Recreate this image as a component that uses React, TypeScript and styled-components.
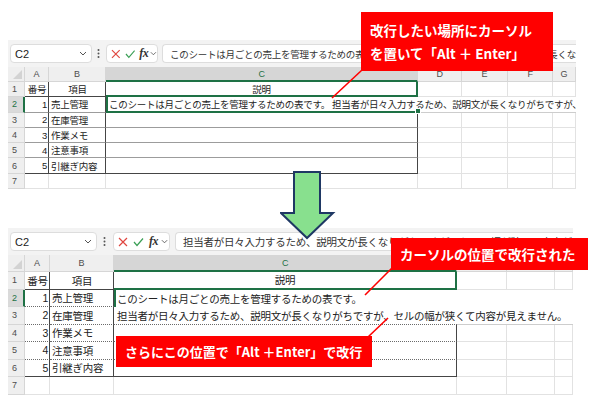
import React from "react";
import styled, { createGlobalStyle } from "styled-components";

const green = "#1e7145";
const jp = `"Liberation Sans", "Noto Sans CJK JP", sans-serif`;

const GlobalStyle = createGlobalStyle`
  html, body { margin: 0; padding: 0; background: #fff; }
  body { font-family: ${jp}; }
`;

const edge = {
  grid: "1px solid #e2e2e2",
  light: "1px solid #cdcdcd",
  dark: "1px solid #454545",
  thin: "1px solid #9c9c9c",
  dot: "1px dotted #6a6a6a",
  green: `2px solid ${green}`,
  none: "0",
};
type Edge = keyof typeof edge;

const Page = styled.div`
  position: relative;
  width: 596px;
  height: 398px;
  overflow: hidden;
  box-sizing: border-box;
  padding: 40px 0 0 8px;
  display: flex;
  flex-direction: column;
`;

const Panel = styled.section<{ $w: number; $mt?: number }>`
  width: ${(p) => p.$w}px;
  margin-top: ${(p) => p.$mt ?? 0}px;
  background: #f3f3f3;
  overflow: hidden;
  flex: none;
`;

/* formula bar */
const FormulaBar = styled.div<{ $h: number }>`
  height: ${(p) => p.$h}px;
  display: flex;
  align-items: center;
  padding-left: 2px;
`;

const NameBox = styled.div<{ $w: number }>`
  width: ${(p) => p.$w}px;
  height: 19px;
  box-sizing: border-box;
  background: #fff;
  border: 1px solid #dddddd;
  border-radius: 4px;
  display: flex;
  align-items: center;
  justify-content: space-between;
  padding: 0 4px 0 4px;
  font: 11px "Liberation Sans", sans-serif;
  color: #222;
`;

const Grip = styled.div<{ $w: number }>`
  width: ${(p) => p.$w}px;
  display: flex;
  justify-content: center;
`;

const FxBox = styled.div<{ $w: number; $gap: number }>`
  width: ${(p) => p.$w}px;
  height: 19px;
  box-sizing: border-box;
  margin-left: 2px;
  background: #fff;
  border: 1px solid #dddddd;
  border-radius: 4px;
  display: flex;
  align-items: center;
  gap: ${(p) => p.$gap}px;
  padding-left: 4px;
`;

const Fx = styled.span`
  font: italic bold 12px "Liberation Serif", serif;
  color: #333;
  letter-spacing: -0.5px;
  margin-right: -2px;
`;

const FormulaInput = styled.div<{ $gap: number; $fs: number }>`
  flex: 1;
  height: 19px;
  margin-left: ${(p) => p.$gap}px;
  box-sizing: border-box;
  background: #fff;
  border: 1px solid #dddddd;
  border-right: 0;
  border-radius: 4px 0 0 4px;
  padding-left: 7px;
  display: flex;
  align-items: center;
  white-space: nowrap;
  overflow: hidden;
  font-size: ${(p) => p.$fs}px;
  letter-spacing: -0.25px;
  color: #333;
`;

/* sheet grid */
const Grid = styled.div<{ $cols: string; $head: number; $row: number; $fs: number }>`
  display: grid;
  grid-template-columns: ${(p) => p.$cols};
  grid-template-rows: ${(p) => p.$head}px repeat(7, ${(p) => p.$row}px);
  background: #fff;
  font-size: ${(p) => p.$fs}px;
  letter-spacing: -0.25px;
  color: #222;
`;

const Corner = styled.div`
  position: relative;
  background: #efefef;
  border-right: 1px solid #d6d6d6;
  border-bottom: 1px solid #d6d6d6;
  &::after {
    content: "";
    position: absolute;
    right: 2px;
    bottom: 2px;
    border-left: 9px solid transparent;
    border-bottom: 9px solid #d3d3d3;
  }
`;

const ColHead = styled.div<{ $active?: boolean }>`
  box-sizing: border-box;
  background: ${(p) => (p.$active ? "#d6d6d6" : "#efefef")};
  border-right: 1px solid #d6d6d6;
  border-bottom: ${(p) => (p.$active ? edge.green : "1px solid #d6d6d6")};
  display: flex;
  align-items: center;
  justify-content: center;
  font: 9px "Liberation Sans", sans-serif;
  color: ${(p) => (p.$active ? green : "#4d4d4d")};
`;

const RowHead = styled.div<{ $active?: boolean }>`
  box-sizing: border-box;
  background: ${(p) => (p.$active ? "#dadada" : "#efefef")};
  border-right: ${(p) => (p.$active ? edge.green : "1px solid #d6d6d6")};
  border-bottom: 1px solid #d6d6d6;
  display: flex;
  align-items: center;
  padding-left: 4px;
  font: 9px "Liberation Sans", sans-serif;
  color: ${(p) => (p.$active ? green : "#4d4d4d")};
`;

const Cell = styled.div<{
  $align?: "left" | "center" | "right";
  $r?: Edge;
  $b?: Edge;
  $span?: number;
  $rows?: number;
}>`
  box-sizing: border-box;
  min-width: 0;
  display: flex;
  align-items: center;
  justify-content: ${(p) =>
    p.$align === "center" ? "center" : p.$align === "right" ? "flex-end" : "flex-start"};
  padding: 0 1px 0 2px;
  white-space: nowrap;
  border-right: ${(p) => edge[p.$r ?? "grid"]};
  border-bottom: ${(p) => edge[p.$b ?? "grid"]};
  grid-column: span ${(p) => p.$span ?? 1};
  grid-row: span ${(p) => p.$rows ?? 1};
`;

const EditCell = styled.div<{ $rows: number; $rowH: number; $b: Edge; $handle?: boolean }>`
  position: relative;
  z-index: 1;
  grid-row: span ${(p) => p.$rows};
  box-sizing: border-box;
  min-width: 0;
  padding-left: 3px;
  display: flex;
  flex-direction: column;
  white-space: nowrap;
  border-bottom: ${(p) => edge[p.$b]};
  &::before {
    content: "";
    position: absolute;
    left: 0;
    top: 0;
    width: 2px;
    height: ${(p) => p.$rowH}px;
    background: ${green};
  }
  &::after {
    content: "";
    display: ${(p) => (p.$handle ? "block" : "none")};
    position: absolute;
    right: -3px;
    bottom: -3px;
    width: 4px;
    height: 4px;
    background: ${green};
    border: 1px solid #fff;
  }
`;

const EditLine = styled.div<{ $h: number }>`
  height: ${(p) => p.$h}px;
  display: flex;
  align-items: center;
`;

const Caret = styled.span`
  display: inline-block;
  width: 1px;
  height: 15px;
  background: #777;
  margin: 0 1px;
`;

/* overlays */
const Callout = styled.div<{ $x: number; $y: number; $w: number; $h: number; $fs?: number }>`
  position: absolute;
  left: ${(p) => p.$x}px;
  top: ${(p) => p.$y}px;
  width: ${(p) => p.$w}px;
  height: ${(p) => p.$h}px;
  box-sizing: border-box;
  background: #ff0000;
  color: #fff;
  font: bold ${(p) => p.$fs ?? 13.5}px "Noto Sans CJK JP", sans-serif;
  line-height: 23px;
  padding-left: 9px;
  display: flex;
  flex-direction: column;
  justify-content: center;
  white-space: nowrap;
  z-index: 5;
`;

const Overlay = styled.svg`
  position: absolute;
  left: 0;
  top: 0;
  z-index: 4;
  pointer-events: none;
`;

const ArrowSvg = styled.svg`
  position: absolute;
  left: 280px;
  top: 170px;
  z-index: 3;
`;

const Chevron = ({ w = 8 }: { w?: number }) => (
  <svg width={w} height="5" viewBox="0 0 8 5">
    <path d="M1 1 L4 4 L7 1" fill="none" stroke="#555" strokeWidth="1" />
  </svg>
);

const TEXT1 = "このシートは月ごとの売上を管理するための表です。";
const TEXT2 = "担当者が日々入力するため、説明文が長くなりがちですが、セルの幅が狭くて内容が見えません。";

type BarProps = {
  nameW: number;
  gripW: number;
  fxW: number;
  iconGap: number;
  gap: number;
  fs: number;
  text: string;
};

const Bar = ({ nameW, gripW, fxW, iconGap, gap, fs, text }: BarProps) => (
  <FormulaBar $h={27}>
    <NameBox $w={nameW}>
      C2
      <Chevron />
    </NameBox>
    <Grip $w={gripW}>
      <svg width="3" height="11" viewBox="0 0 3 11">
        <circle cx="1.5" cy="2" r="1" fill="#555" />
        <circle cx="1.5" cy="5.5" r="1" fill="#555" />
        <circle cx="1.5" cy="9" r="1" fill="#555" />
      </svg>
    </Grip>
    <FxBox $w={fxW} $gap={iconGap}>
      <svg width="10" height="10" viewBox="0 0 10 10">
        <path d="M1 1 L9 9 M9 1 L1 9" stroke="#e0463f" strokeWidth="1.2" />
      </svg>
      <svg width="11" height="10" viewBox="0 0 11 10">
        <path d="M1 5 L4 8.5 L10 1.5" fill="none" stroke="#3a9f55" strokeWidth="1.2" />
      </svg>
      <Fx>fx</Fx>
      <Chevron w={7} />
    </FxBox>
    <FormulaInput $gap={gap} $fs={fs}>
      {text}
    </FormulaInput>
  </FormulaBar>
);

const ITEMS = ["売上管理", "在庫管理", "作業メモ", "注意事項", "引継ぎ内容"];

const TopSheet = () => {
  const rowH = 15.3;
  return (
    <Panel $w={568}>
      <Bar nameW={82} gripW={12} fxW={52} iconGap={4} gap={4} fs={9.5} text={TEXT1 + TEXT2} />
      <Grid $cols="17px 24px 57px 312px 44px 46px 45px 1fr" $head={15} $row={rowH} $fs={9.5}>
        <Corner />
        {["A", "B", "C", "D", "E", "F", "G"].map((c) => (
          <ColHead key={c} $active={c === "C"}>
            {c}
          </ColHead>
        ))}

        <RowHead>1</RowHead>
        <Cell $align="center" $r="dark" $b="dark">番号</Cell>
        <Cell $align="center" $r="dark" $b="dark">項目</Cell>
        <Cell $align="center" $r="green" $b="green">説明</Cell>
        <Cell />
        <Cell />
        <Cell />
        <Cell />

        <RowHead $active>2</RowHead>
        <Cell $align="right" $r="dark" $b="thin">1</Cell>
        <Cell $r="dark" $b="thin">{ITEMS[0]}</Cell>
        <EditCell $rows={1} $rowH={rowH} $b="green" $handle>
          <EditLine $h={rowH - 2}>
            {TEXT1}
            <Caret />
            {TEXT2}
          </EditLine>
        </EditCell>
        <Cell $span={4} $r="none" $b="light" />

        {[3, 4, 5, 6].map((n) => (
          <React.Fragment key={n}>
            <RowHead>{n}</RowHead>
            <Cell $align="right" $r="dark" $b={n === 6 ? "dark" : "thin"}>
              {n - 1}
            </Cell>
            <Cell $r="dark" $b={n === 6 ? "dark" : "thin"}>
              {ITEMS[n - 2]}
            </Cell>
            <Cell $r="dark" $b={n === 6 ? "dark" : "thin"} />
            <Cell />
            <Cell />
            <Cell />
            <Cell />
          </React.Fragment>
        ))}

        <RowHead>7</RowHead>
        {[0, 1, 2, 3, 4, 5, 6].map((i) => (
          <Cell key={i} />
        ))}
      </Grid>
    </Panel>
  );
};

const BottomSheet = () => {
  const rowH = 17.5;
  return (
    <Panel $w={565} $mt={39}>
      <Bar nameW={87} gripW={14} fxW={57} iconGap={5} gap={5} fs={10.5} text={TEXT2} />
      <Grid $cols="17px 25px 64px 343px 50px 48px 1fr" $head={17} $row={rowH} $fs={10.5}>
        <Corner />
        {["A", "B", "C", "D", "E", "F"].map((c) => (
          <ColHead key={c} $active={c === "C"}>
            {c}
          </ColHead>
        ))}

        <RowHead>1</RowHead>
        <Cell $align="center" $r="dark" $b="dark">番号</Cell>
        <Cell $align="center" $r="dark" $b="dark">項目</Cell>
        <Cell $align="center" $r="green" $b="green">説明</Cell>
        <Cell />
        <Cell />
        <Cell />

        <RowHead $active>2</RowHead>
        <Cell $align="right" $r="dark" $b="dot">1</Cell>
        <Cell $r="dark" $b="dot">{ITEMS[0]}</Cell>
        <EditCell $rows={2} $rowH={rowH} $b="dot">
          <EditLine $h={rowH}>{TEXT1}</EditLine>
          <EditLine $h={rowH - 1}>{TEXT2}</EditLine>
        </EditCell>
        <Cell $span={3} $rows={2} $r="none" $b="light" />

        <RowHead>3</RowHead>
        <Cell $align="right" $r="dark" $b="dot">2</Cell>
        <Cell $r="dark" $b="dot">{ITEMS[1]}</Cell>

        {[4, 5, 6].map((n) => (
          <React.Fragment key={n}>
            <RowHead>{n}</RowHead>
            <Cell $align="right" $r="dark" $b={n === 6 ? "dark" : "dot"}>
              {n - 1}
            </Cell>
            <Cell $r="dark" $b={n === 6 ? "dark" : "dot"}>
              {ITEMS[n - 2]}
            </Cell>
            <Cell $r="dark" $b={n === 6 ? "dark" : "dot"} />
            <Cell />
            <Cell />
            <Cell />
          </React.Fragment>
        ))}

        <RowHead>7</RowHead>
        {[0, 1, 2, 3, 4, 5].map((i) => (
          <Cell key={i} />
        ))}
      </Grid>
    </Panel>
  );
};

const App = () => (
  <>
    <GlobalStyle />
    <Page>
      <TopSheet />
      <BottomSheet />

      <ArrowSvg width="56" height="72" viewBox="0 0 56 72">
        <polygon
          points="14,2 40,2 40,43 53,43 27,68 1,43 14,43"
          fill="#88e08e"
          stroke="#1f3864"
          strokeWidth="2"
          strokeLinejoin="miter"
        />
      </ArrowSvg>

      <Overlay width="596" height="398" viewBox="0 0 596 398">
        <line x1="362" y1="70" x2="332" y2="98" stroke="#ff0000" strokeWidth="1.6" />
        <line x1="392" y1="268" x2="365" y2="295" stroke="#ff0000" strokeWidth="1.6" />
        <line x1="368" y1="337" x2="388" y2="318" stroke="#ff0000" strokeWidth="1.6" />
      </Overlay>

      <Callout $x={361} $y={12} $w={192} $h={59}>
        <span>改行したい場所にカーソル</span>
        <span>を置いて「Alt ＋ Enter」</span>
      </Callout>
      <Callout $x={391} $y={238} $w={197} $h={32}>
        <span>カーソルの位置で改行された</span>
      </Callout>
      <Callout $x={116} $y={336} $w={256} $h={31} $fs={13}>
        <span>さらにこの位置で「Alt ＋Enter」で改行</span>
      </Callout>
    </Page>
  </>
);

export default App;
